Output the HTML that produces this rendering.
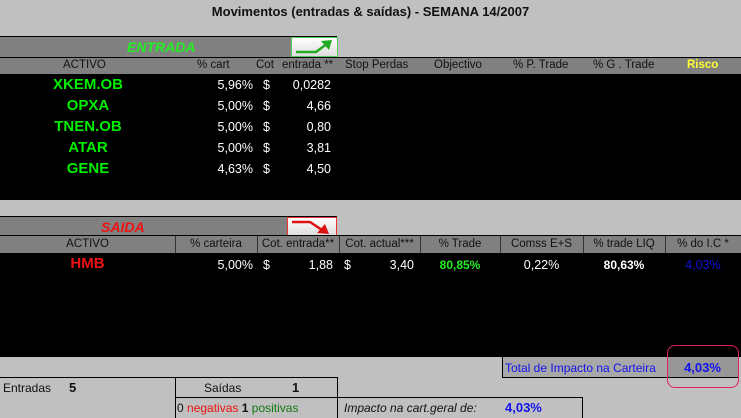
<!DOCTYPE html>
<html><head><meta charset="utf-8"><style>
body{margin:0;width:741px;height:418px;background:#c0c0c0;position:relative;overflow:hidden;font-family:"Liberation Sans",Arial,sans-serif;font-size:12px;}
div{position:absolute;box-sizing:border-box;}
.t{white-space:nowrap;line-height:1;}
.g{background:#808080;}
.blk{background:#000;}
.hd{color:#111;font-size:11.5px;}
.nm{color:#00ee00;font-weight:bold;font-size:15px;}
.w{color:#fff;font-size:12.5px;}
</style></head><body>
<div class="t" style="left:0;width:741px;top:5px;text-align:center;font-weight:bold;font-size:13px;color:#111;">Movimentos (entradas &amp; saídas) - SEMANA 14/2007</div>

<!-- ENTRADA bar -->
<div class="g" style="left:0;top:36px;width:337px;height:21px;border-top:1px solid #000;border-right:1px solid #000;"></div>
<div class="t" style="left:127px;top:40px;color:#22ee22;font-weight:bold;font-style:italic;font-size:14px;">ENTRADA</div>
<div style="left:291px;top:37px;width:47px;height:20px;background:linear-gradient(#fff,#ddd);border:1px solid #55cc55;">
<svg width="45" height="18" style="position:absolute;left:0;top:0"><path d="M4 14 H24 L36 5" stroke="#22aa22" stroke-width="2.5" fill="none"/><path d="M29 3 L40 2 L37 12 Z" fill="#22aa22"/></svg></div>
<div class="g" style="left:0;top:57px;width:741px;height:17px;border-top:1px solid #000;"></div>
<div class="t hd" style="left:63px;top:60px;">ACTIVO</div>
<div class="t hd" style="left:197px;top:60px;">% cart</div>
<div class="t hd" style="left:256px;top:60px;">Cot</div>
<div class="t hd" style="left:282px;top:60px;">entrada **</div>
<div class="t hd" style="left:345px;top:60px;">Stop Perdas</div>
<div class="t hd" style="left:434px;top:60px;">Objectivo</div>
<div class="t hd" style="left:513px;top:60px;">% P. Trade</div>
<div class="t hd" style="left:593px;top:60px;">% G . Trade</div>
<div class="t" style="left:687px;top:60px;color:#ffff33;font-weight:bold;font-size:11.5px;">Risco</div>
<div class="blk" style="left:0;top:74px;width:741px;height:126px;"></div>

<div class="t nm" style="left:0;width:176px;text-align:center;top:77px;">XKEM.OB</div>
<div class="t nm" style="left:0;width:176px;text-align:center;top:98px;">OPXA</div>
<div class="t nm" style="left:0;width:176px;text-align:center;top:119px;">TNEN.OB</div>
<div class="t nm" style="left:0;width:176px;text-align:center;top:140px;">ATAR</div>
<div class="t nm" style="left:0;width:176px;text-align:center;top:161px;">GENE</div>
<div class="t w" style="left:180px;width:73px;text-align:right;top:79px;">5,96%</div>
<div class="t w" style="left:180px;width:73px;text-align:right;top:100px;">5,00%</div>
<div class="t w" style="left:180px;width:73px;text-align:right;top:121px;">5,00%</div>
<div class="t w" style="left:180px;width:73px;text-align:right;top:142px;">5,00%</div>
<div class="t w" style="left:180px;width:73px;text-align:right;top:163px;">4,63%</div>
<div class="t w" style="left:263px;top:79px;">$</div><div class="t w" style="left:263px;top:100px;">$</div><div class="t w" style="left:263px;top:121px;">$</div><div class="t w" style="left:263px;top:142px;">$</div><div class="t w" style="left:263px;top:163px;">$</div>
<div class="t w" style="left:270px;width:61px;text-align:right;top:79px;">0,0282</div>
<div class="t w" style="left:270px;width:61px;text-align:right;top:100px;">4,66</div>
<div class="t w" style="left:270px;width:61px;text-align:right;top:121px;">0,80</div>
<div class="t w" style="left:270px;width:61px;text-align:right;top:142px;">3,81</div>
<div class="t w" style="left:270px;width:61px;text-align:right;top:163px;">4,50</div>

<!-- SAIDA -->
<div class="g" style="left:0;top:216px;width:337px;height:20px;border-top:1px solid #000;border-right:1px solid #000;"></div>
<div class="t" style="left:101px;top:220px;color:#ee1111;font-weight:bold;font-style:italic;font-size:14px;">SAIDA</div>
<div style="left:287px;top:217px;width:50px;height:19px;background:linear-gradient(#fff,#ddd);border:1px solid #ee3333;">
<svg width="48" height="17" style="position:absolute;left:0;top:0"><path d="M4 4 H22 L34 12" stroke="#dd1111" stroke-width="2.5" fill="none"/><path d="M29 15 L41 16 L37 6 Z" fill="#dd1111"/></svg></div>
<div class="g" style="left:0;top:235px;width:741px;height:18px;border-top:1px solid #000;"></div>
<div style="left:175px;top:236px;width:1px;height:17px;background:#333"></div>
<div style="left:257px;top:236px;width:1px;height:17px;background:#333"></div>
<div style="left:339px;top:236px;width:1px;height:17px;background:#333"></div>
<div style="left:420px;top:236px;width:1px;height:17px;background:#333"></div>
<div style="left:500px;top:236px;width:1px;height:17px;background:#333"></div>
<div style="left:583px;top:236px;width:1px;height:17px;background:#333"></div>
<div style="left:665px;top:236px;width:1px;height:17px;background:#333"></div>
<div class="t hd" style="left:0;width:175px;text-align:center;top:239px;">ACTIVO</div>
<div class="t hd" style="left:175px;width:82px;text-align:center;top:239px;">% carteira</div>
<div class="t hd" style="left:257px;width:82px;text-align:center;top:239px;">Cot. entrada**</div>
<div class="t hd" style="left:339px;width:81px;text-align:center;top:239px;">Cot. actual***</div>
<div class="t hd" style="left:420px;width:80px;text-align:center;top:239px;">% Trade</div>
<div class="t hd" style="left:500px;width:83px;text-align:center;top:239px;">Comss E+S</div>
<div class="t hd" style="left:583px;width:82px;text-align:center;top:239px;">% trade LIQ</div>
<div class="t hd" style="left:665px;width:76px;text-align:center;top:239px;">% do I.C *</div>
<div class="blk" style="left:0;top:253px;width:741px;height:104px;"></div>
<div class="t" style="left:0;width:175px;text-align:center;top:256px;color:#ee1111;font-weight:bold;font-size:15px;">HMB</div>
<div class="t w" style="left:180px;width:73px;text-align:right;top:259px;">5,00%</div>
<div class="t w" style="left:263px;top:259px;">$</div>
<div class="t w" style="left:270px;width:63px;text-align:right;top:259px;">1,88</div>
<div class="t w" style="left:344px;top:259px;">$</div>
<div class="t w" style="left:350px;width:64px;text-align:right;top:259px;">3,40</div>
<div class="t" style="left:420px;width:80px;text-align:center;top:259px;color:#22ee22;font-weight:bold;font-size:12px;">80,85%</div>
<div class="t w" style="left:500px;width:83px;text-align:center;top:259px;">0,22%</div>
<div class="t" style="left:583px;width:82px;text-align:center;top:259px;color:#fff;font-weight:bold;font-size:12px;">80,63%</div>
<div class="t" style="left:665px;width:76px;text-align:center;top:259px;color:#1111dd;font-size:12.5px;">4,03%</div>

<!-- totals -->
<div style="left:502px;top:357px;width:166px;height:21px;background:#a8a8a8;border:1px solid #000;border-top:none;"></div>
<div class="t" style="left:505px;top:362px;color:#1111ee;font-size:12px;">Total de Impacto na Carteira</div>
<div style="left:667px;top:357px;width:71px;height:21px;background:#979797;border-bottom:1px solid #000;"></div>
<div class="t" style="left:667px;width:71px;text-align:center;top:361px;color:#1111ee;font-weight:bold;font-size:13px;">4,03%</div>
<div style="left:667px;top:345px;width:72px;height:43px;border:1px solid #e0206a;border-radius:8px;"></div>

<div style="left:0;top:377px;width:338px;height:20px;border-top:1px solid #000;border-right:1px solid #000;"></div>
<div style="left:175px;top:377px;width:1px;height:41px;background:#000"></div>
<div class="t" style="left:3px;top:382px;font-size:12px;color:#111;">Entradas</div>
<div class="t" style="left:69px;top:381px;font-size:13px;font-weight:bold;color:#111;">5</div>
<div class="t" style="left:204px;top:382px;font-size:12px;color:#111;">Saídas</div>
<div class="t" style="left:292px;top:381px;font-size:13px;font-weight:bold;color:#111;">1</div>
<div style="left:175px;top:397px;width:408px;height:21px;border-top:1px solid #000;border-right:1px solid #000;"></div>
<div style="left:337px;top:397px;width:1px;height:21px;background:#000"></div>
<div class="t" style="left:177px;top:402px;font-size:12px;"><span style="color:#111">0</span> <span style="color:#ee1111">negativas</span> <b style="color:#111">1</b> <span style="color:#117711">positivas</span></div>
<div class="t" style="left:344px;top:402px;font-size:12px;font-style:italic;color:#111;">Impacto na cart.geral de:</div>
<div class="t" style="left:505px;top:401px;font-size:13px;font-weight:bold;color:#1111ee;">4,03%</div>
</body></html>
